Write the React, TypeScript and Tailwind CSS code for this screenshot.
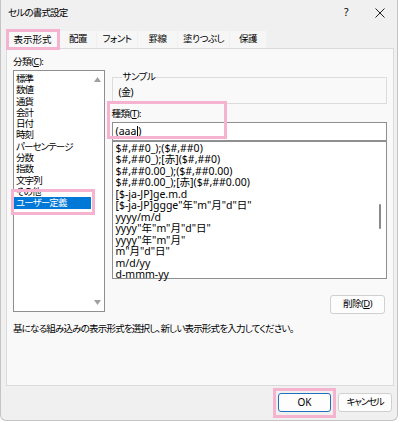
const categories = [
  "標準",
  "数値",
  "通貨",
  "会計",
  "日付",
  "時刻",
  "パーセンテージ",
  "分数",
  "指数",
  "文字列",
  "その他",
  "ユーザー定義",
];

const formats = [
  "$#,##0_);($#,##0)",
  "$#,##0_);[赤]($#,##0)",
  "$#,##0.00_);($#,##0.00)",
  "$#,##0.00_);[赤]($#,##0.00)",
  "[$-ja-JP]ge.m.d",
  '[$-ja-JP]ggge"年"m"月"d"日"',
  "yyyy/m/d",
  'yyyy"年"m"月"d"日"',
  'yyyy"年"m"月"',
  'm"月"d"日"',
  "m/d/yy",
  "d-mmm-yy",
];

const tabs = [
  { label: "配置", w: "w-[36px]" },
  { label: "フォント", w: "w-[40px]" },
  { label: "罫線", w: "w-[39px]" },
  { label: "塗りつぶし", w: "w-[51px]" },
  { label: "保護", w: "w-[36px]" },
];

const App = () => {
  return (
    <div className="h-[422px] w-[400px] bg-white font-['Noto_Sans','Noto_Sans_CJK_JP',sans-serif] text-[9.5px] tracking-[-0.5px] text-black [font-feature-settings:'palt']">
      <div className="flex h-[421px] w-[398px] flex-col rounded-b-[6px] border-b border-r border-l border-[#c4c4c4] bg-[#f0f0f0]">
        {/* title bar */}
        <div className="flex h-[26px] items-center pl-[7px]">
          <span className="whitespace-nowrap leading-[12px] tracking-[-0.8px]">セルの書式設定</span>
          <span className="ml-auto mr-[27px] text-[10.5px]">?</span>
          <svg width="10" height="10" viewBox="0 0 10 10" className="mr-[12px]">
            <path d="M0.5 0.5 L9.5 9.5 M9.5 0.5 L0.5 9.5" stroke="#222" strokeWidth="1" />
          </svg>
        </div>

        {/* tabs */}
        <div className="mt-[4px] flex items-end gap-[1px] whitespace-nowrap pl-[5px]">
          <div className="relative -mb-px flex h-[19px] w-[53px] items-center justify-center border border-b-0 border-[#dadada] bg-[#f9f9f9] tracking-[0px]">
            表示形式
            <div className="pointer-events-none absolute -left-px -top-[2px] h-[21px] w-[54px] border-[3px] border-[#f5b3cf]" />
          </div>
          {tabs.map((t) => (
            <div key={t.label} className={`flex h-[17px] items-center justify-center bg-[#f6f6f6] ${t.w}`}>
              {t.label}
            </div>
          ))}
        </div>

        {/* panel */}
        <div className="ml-[5px] flex h-[338px] w-[388px] flex-col border border-[#dadada] bg-[#f9f9f9] px-[6px]">
          <div className="flex">
            {/* left column */}
            <div className="mt-[7px] flex w-[92px] flex-col">
              <div className="h-[14px] leading-[12px]">
                分類(<span className="underline">C</span>):
              </div>
              <div className="relative flex h-[242px] border border-[#8f8f8f] bg-white">
                <div className="flex flex-1 flex-col whitespace-nowrap pt-[2px] leading-[11.3px] tracking-[-0.9px]">
                  {categories.map((c) =>
                    c === "ユーザー定義" ? (
                      <div key={c} className="bg-[#0078d7] pl-[2px] text-white">
                        {c}
                      </div>
                    ) : (
                      <div key={c} className="pl-[2px]">
                        {c}
                      </div>
                    )
                  )}
                </div>
                <div className="flex w-[13px] flex-col items-center justify-between py-[6px]">
                  <svg width="7" height="5" viewBox="0 0 7 5">
                    <path d="M0 5 L3.5 0 L7 5 Z" fill="#a0a0a0" />
                  </svg>
                  <svg width="7" height="5" viewBox="0 0 7 5">
                    <path d="M0 0 L3.5 5 L7 0 Z" fill="#a0a0a0" />
                  </svg>
                </div>
                <div className="pointer-events-none absolute left-[-3px] top-[118px] h-[26px] w-[84px] border-[3px] border-[#f5b3cf]" />
              </div>
            </div>

            {/* right column */}
            <div className="ml-[7px] flex w-[277px] flex-col pt-[22px]">
              <fieldset className="h-[33px] border border-[#dcdcdc] pl-[6px]">
                <legend className="ml-[3px] px-[1px] leading-[12px]">サンプル</legend>
                <div className="pt-[3px] text-[10px] leading-[12px]">(金)</div>
              </fieldset>
              <div className="relative">
                <div className="mt-[4px] h-[14px] leading-[12px]">
                  種類(<span className="underline">T</span>):
                </div>
                <div className="flex h-[19px] items-center border border-[#8f8f8f] bg-white pl-[3px] text-[10.5px] tracking-normal">
                  (aaa
                  <span className="mx-[0.5px] inline-block h-[12px] w-px bg-black" />)
                </div>
                <div className="pointer-events-none absolute left-[-5px] top-[-3px] h-[38px] w-[120px] border-[3px] border-[#f5b3cf]" />
              </div>
              <div className="relative flex h-[138px] border border-[#8f8f8f] bg-white">
                <div className="flex-1 pl-[3px] pt-[1px] text-[10.5px] leading-[11.45px] tracking-normal">
                  {formats.map((f) => (
                    <div key={f} className="whitespace-nowrap">
                      {f}
                    </div>
                  ))}
                </div>
                <div className="flex w-[12px] justify-center pt-[62px]">
                  <div className="h-[25px] w-[2px] rounded-full bg-[#8a8a8a]" />
                </div>
              </div>
              <div className="mr-[2px] mt-[16px] flex h-[19px] w-[55px] items-center justify-center self-end whitespace-nowrap rounded-[3px] border border-[#d0d0d0] bg-[#fdfdfd]">
                削除(<span className="underline">D</span>)
              </div>
            </div>
          </div>
          <div className="mt-[9px] whitespace-nowrap leading-[12px] tracking-[-0.8px]">
            基になる組み込みの表示形式を選択し、新しい表示形式を入力してください。
          </div>
        </div>

        {/* buttons */}
        <div className="mt-[7px] flex justify-end gap-[7px] whitespace-nowrap pr-[5px]">
          <div className="relative flex h-[19px] w-[53px] items-center justify-center rounded-[3px] border border-[#1f6fbf] bg-[#fdfdfd] text-[10px] tracking-normal">
            OK
            <div className="pointer-events-none absolute left-[-6px] top-[-6px] h-[30px] w-[63px] border-[3px] border-[#f5b3cf]" />
          </div>
          <div className="flex h-[19px] w-[54px] items-center justify-center rounded-[3px] border border-[#d0d0d0] bg-[#fdfdfd] tracking-[-1.2px]">
            キャンセル
          </div>
        </div>
      </div>
    </div>
  );
};

export default App;
